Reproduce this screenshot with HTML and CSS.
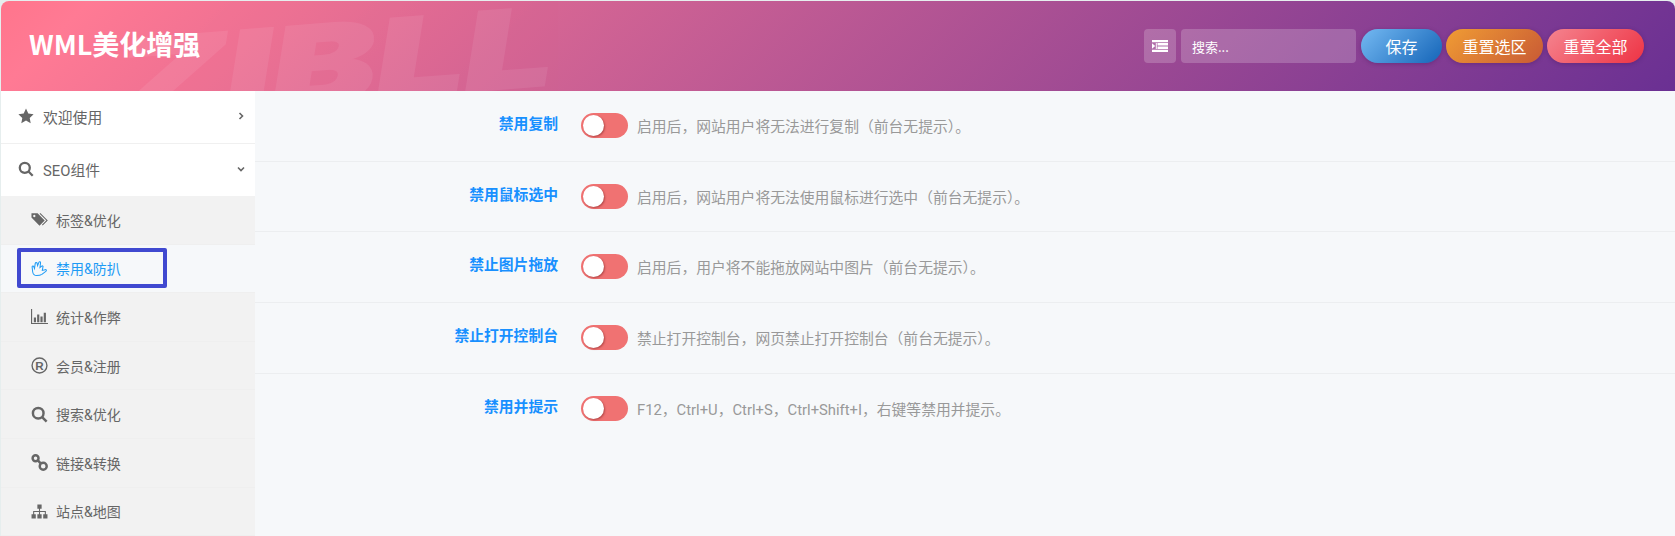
FILE: index.html
```html
<!DOCTYPE html>
<html lang="zh-CN">
<head>
    <meta charset="UTF-8">
    <meta name="viewport" content="width=device-width, initial-scale=1.0">
    <title>WML美化增强</title>
    <link rel="stylesheet" href="styles.css">
</head>
<body>
    <div class="panel">
        <header class="topbar">
            <span class="watermark">ZIBLL</span>
            <h1 class="brand">WML美化增强</h1>
            <div class="actions">
                <button class="btn-icon" aria-label="折叠">
                    <svg width="16" height="12" viewBox="0 0 16 12"><path fill="#fff" d="M0 0h16v2.200H0zM5.500 3h10.500v2.500H5.500zM5.500 6.500h10.500v2.500H5.500zM0 9.800h16V12H0zM0 3.200 3.200 6 0 8.800zM3.800 3h1v6h-1z"/></svg>
                </button>
                <input class="search" type="text" placeholder="搜索...">
                <button class="btn btn-save">保存</button>
                <button class="btn btn-section">重置选区</button>
                <button class="btn btn-all">重置全部</button>
            </div>
        </header>

        <div class="main">
            <nav class="sidebar">
                <a class="nav-item">
                    <svg class="ico" viewBox="0 0 16 16"><path d="M8 .6l2.300 4.900 5.300.7-3.900 3.700 1 5.300L8 12.600l-4.700 2.600 1-5.300L.4 6.200l5.300-.7z"/></svg>
                    <span>欢迎使用</span>
                    <svg class="caret" viewBox="0 0 8 8"><path d="M2.500 1l3 3-3 3"/></svg>
                </a>
                <a class="nav-item">
                    <svg class="ico" viewBox="0 0 16 16"><circle class="line" cx="6.800" cy="6.800" r="5"/><path class="line" d="M10.500 10.500l4.200 4.200"/></svg>
                    <span>SEO组件</span>
                    <svg class="caret" viewBox="0 0 8 8"><path d="M1 2.500l3 3 3-3"/></svg>
                </a>
                <div class="submenu">
                    <a class="sub-item">
                        <svg class="ico" viewBox="0 0 18 16"><path fill-rule="evenodd" d="M.5 1.500h6.500l7.500 7.500-5.500 5.500-8.500-8.500zM3.500 3a1.300 1.300 0 1 0 .01 0z"/><path class="thin" d="M9.500 1.500l7.500 7.500-5 5"/></svg>
                        <span>标签&amp;优化</span>
                    </a>
                    <a class="sub-item active">
                        <svg class="ico" viewBox="0 0 18 18"><path class="thin" d="M6 16.500c-2.500 0-3.800-1.500-4.200-3.800L1.200 7.500C1 6.300 2.600 6 3 7.200L3.700 9 4.500 3.500c.2-1.200 1.800-1.200 2 0L7 6l1.300-3.500c.5-1.100 2-.6 1.800.6L9.500 8l1.800-1.500c.9-.7 1.900.2 1.300 1.200L12 11l3-.8c1.300-.3 1.800 1.200.7 1.800l-4.200 3.200c-1.400 1-3.500 1.300-5.500 1.300z"/></svg>
                        <span>禁用&amp;防扒</span>
                        <i class="mark"></i>
                    </a>
                    <a class="sub-item">
                        <svg class="ico" viewBox="0 0 18 16"><path d="M0 0h1.200v14.800H18V16H0zM3 9h2.300v5H3zM6.500 6h2.300v8H6.500zM10 8h2.300v6H10zM13.500 4h2.300v10h-2.300z"/></svg>
                        <span>统计&amp;作弊</span>
                    </a>
                    <a class="sub-item">
                        <svg class="ico" viewBox="0 0 16 16"><circle class="line thin-ring" cx="8" cy="8" r="7"/><text class="reg" x="8" y="12" text-anchor="middle">R</text></svg>
                        <span>会员&amp;注册</span>
                    </a>
                    <a class="sub-item">
                        <svg class="ico" viewBox="0 0 16 16"><circle class="line" cx="6.800" cy="6.800" r="5"/><path class="line" d="M10.500 10.500l4.200 4.200"/></svg>
                        <span>搜索&amp;优化</span>
                    </a>
                    <a class="sub-item">
                        <svg class="ico" viewBox="0 0 16 16"><circle class="line" cx="4.300" cy="4" r="2.800"/><circle class="line" cx="11.500" cy="11.500" r="3.300"/><path class="line" d="M6.500 6l3 3.300"/></svg>
                        <span>链接&amp;转换</span>
                    </a>
                    <a class="sub-item">
                        <svg class="ico" viewBox="0 0 16 16"><path d="M6 1.500h4v4H8.500v2H14v3h1.500v4h-4v-4H13V8.500H8.500v2H10v4H6v-4h1.500v-2H3v2h1.500v4h-4v-4H2v-3h5.500v-2H6z"/></svg>
                        <span>站点&amp;地图</span>
                    </a>
                </div>
            </nav>

            <section class="content">
                <div class="row">
                    <label class="row-label">禁用复制</label>
                    <span class="toggle"></span>
                    <p class="row-desc">启用后，网站用户将无法进行复制（前台无提示）。</p>
                </div>
                <div class="row">
                    <label class="row-label">禁用鼠标选中</label>
                    <span class="toggle"></span>
                    <p class="row-desc">启用后，网站用户将无法使用鼠标进行选中（前台无提示）。</p>
                </div>
                <div class="row">
                    <label class="row-label">禁止图片拖放</label>
                    <span class="toggle"></span>
                    <p class="row-desc">启用后，用户将不能拖放网站中图片（前台无提示）。</p>
                </div>
                <div class="row">
                    <label class="row-label">禁止打开控制台</label>
                    <span class="toggle"></span>
                    <p class="row-desc">禁止打开控制台，网页禁止打开控制台（前台无提示）。</p>
                </div>
                <div class="row row-last">
                    <label class="row-label">禁用并提示</label>
                    <span class="toggle"></span>
                    <p class="row-desc">F12，Ctrl+U，Ctrl+S，Ctrl+Shift+I，右键等禁用并提示。</p>
                </div>
            </section>
        </div>
    </div>
</body>
</html>
```

FILE: styles.css
```css
* {
    box-sizing: border-box;
}
body {
    margin: 0;
    height: 536px;
    overflow: hidden;
    background-color: #e6eeee;
    font-family: Roboto, "Noto Sans CJK SC", sans-serif;
    font-size: 14.8px;
    color: #666;
}
.panel {
    margin: 1px 0 0 1px;
    height: 535px;
    display: flex;
    flex-direction: column;
    border-radius: 8px 8px 0 0;
    overflow: hidden;
}

/* header */
.topbar {
    position: relative;
    flex: none;
    height: 90px;
    display: flex;
    align-items: center;
    justify-content: space-between;
    padding: 0 31px 0 28px;
    overflow: hidden;
    background: linear-gradient(135deg, #ff758c 0%, #ff7a94 5%, #6a3093 100%);
}
.watermark {
    position: absolute;
    left: 116px;
    top: 25px;
    font-family: Inter, "Liberation Sans", sans-serif;
    font-size: 108px;
    font-weight: 900;
    font-style: italic;
    line-height: 1;
    color: #fff;
    opacity: 0.07;
    -webkit-text-stroke: 2px #fff;
    transform: rotate(-4.5deg) scaleX(1.45);
    transform-origin: left center;
    white-space: nowrap;
}
.brand {
    position: relative;
    margin: -5px 0 0;
    font-family: "Noto Sans CJK SC", sans-serif;
    font-size: 27px;
    font-weight: 700;
    line-height: 1;
    color: #fff;
}
.actions {
    position: relative;
    display: flex;
    align-items: center;
    gap: 5px;
}
.btn-icon {
    width: 32px;
    height: 34px;
    padding: 0;
    display: flex;
    align-items: center;
    justify-content: center;
    border: none;
    border-radius: 4px;
    background: rgba(255, 255, 255, 0.2);
}
.search {
    width: 175px;
    height: 34px;
    padding: 0 11px;
    border: none;
    border-radius: 4px;
    background: rgba(255, 255, 255, 0.2);
    font-family: "Noto Sans CJK SC", sans-serif;
    font-size: 13px;
    color: #fff;
}
.search::placeholder {
    color: #fff;
    opacity: 1;
}
.btn {
    height: 34px;
    padding: 0;
    border: none;
    border-radius: 17px;
    font-family: "Noto Sans CJK SC", sans-serif;
    font-size: 16px;
    color: #fff;
    box-shadow: 0 1px 4px rgba(60, 20, 80, 0.35);
}
.btn-save {
    width: 81px;
    background: linear-gradient(135deg, #74b9f2, #1565b8);
}
.btn-section {
    width: 97px;
    margin-left: -1px;
    background: linear-gradient(135deg, #f09c34, #c85a35);
}
.btn-all {
    width: 97px;
    margin-left: -1px;
    background: linear-gradient(135deg, #f5848f, #ee3344);
}

/* body */
.main {
    flex: 1;
    display: flex;
    min-height: 0;
}
.sidebar {
    flex: none;
    width: 254px;
    background: #fff;
}
.nav-item {
    height: 53px;
    display: flex;
    align-items: center;
    padding: 0 10px 2px 17px;
    border-bottom: 1px solid #f0f0f0;
}
.nav-item span {
    flex: 1;
    margin-left: 9px;
}
.nav-item + .nav-item {
    height: 52px;
    border-bottom: none;
}
.sub-item {
    position: relative;
    height: 48.600px;
    display: flex;
    align-items: center;
    padding-left: 30px;
    background: #f2f2f2;
    border-bottom: 1px solid #efefef;
    font-size: 14px;
}
.sub-item span {
    margin-left: 8px;
}
.sub-item.active {
    background: #f6f8fa;
    color: #1e9bf5;
}
.mark {
    position: absolute;
    left: 16px;
    top: 3px;
    width: 150px;
    height: 40px;
    border: 4px solid #4049d0;
    border-radius: 2px;
}
.ico {
    flex: none;
    width: 17px;
    height: 17px;
    fill: #666;
}
.nav-item .ico {
    width: 16px;
    height: 16px;
}
.ico .line {
    fill: none;
    stroke: #666;
    stroke-width: 2.300;
}
.ico .thin {
    fill: none;
    stroke: #666;
    stroke-width: 1.100;
}
.ico .thin-ring {
    stroke-width: 1.300;
}
.ico .reg {
    font-family: "Liberation Sans", sans-serif;
    font-size: 11px;
    font-weight: 700;
}
.active .ico .thin {
    stroke: #1e9bf5;
}
.caret {
    flex: none;
    width: 8px;
    height: 8px;
    fill: none;
    stroke: #666;
    stroke-width: 1.600;
}

/* options */
.content {
    flex: 1;
    background: #f6f8fa;
}
.row {
    height: 70.700px;
    display: flex;
    align-items: flex-start;
    padding-top: 22px;
    border-bottom: 1px solid #eceef0;
}
.row-last {
    border-bottom: none;
}
.row-label {
    flex: none;
    width: 303px;
    text-align: right;
    font-weight: 700;
    color: #1890ff;
    line-height: 20px;
    margin-top: 1px;
}
.toggle {
    position: relative;
    flex: none;
    width: 47px;
    height: 25px;
    margin-left: 23px;
    border-radius: 13px;
    background: #f07272;
}
.toggle::after {
    content: "";
    position: absolute;
    left: 2px;
    top: 2px;
    width: 21px;
    height: 21px;
    border-radius: 50%;
    background: #fff;
    box-shadow: 1px 1px 2px rgba(120, 30, 30, 0.5);
}
.row-desc {
    margin: 4px 0 0 9px;
    line-height: 20px;
    color: #999;
}
```
